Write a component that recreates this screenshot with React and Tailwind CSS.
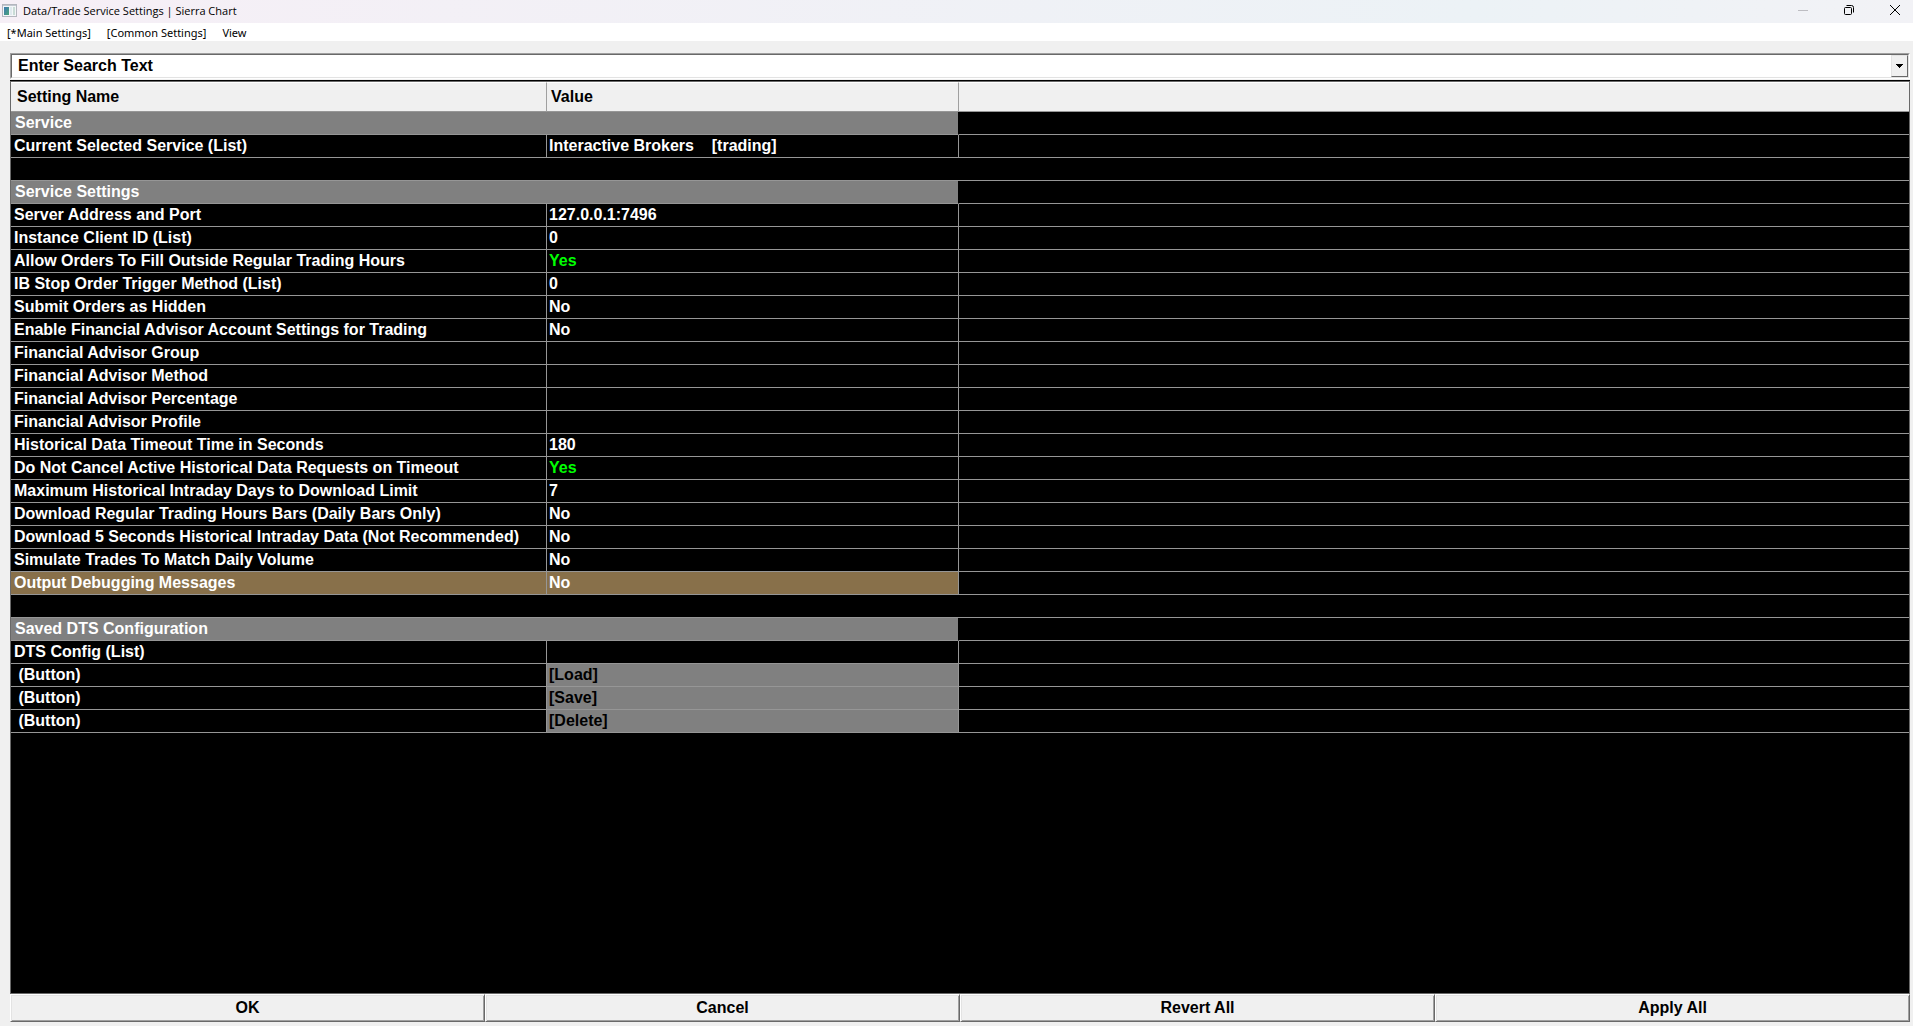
const SECTIONS = [
  {
    title: "Service",
    rows: [{ name: "Current Selected Service (List)", value: "Interactive Brokers    [trading]" }],
  },
  {
    title: "Service Settings",
    rows: [
      { name: "Server Address and Port", value: "127.0.0.1:7496" },
      { name: "Instance Client ID (List)", value: "0" },
      { name: "Allow Orders To Fill Outside Regular Trading Hours", value: "Yes" },
      { name: "IB Stop Order Trigger Method (List)", value: "0" },
      { name: "Submit Orders as Hidden", value: "No" },
      { name: "Enable Financial Advisor Account Settings for Trading", value: "No" },
      { name: "Financial Advisor Group", value: "" },
      { name: "Financial Advisor Method", value: "" },
      { name: "Financial Advisor Percentage", value: "" },
      { name: "Financial Advisor Profile", value: "" },
      { name: "Historical Data Timeout Time in Seconds", value: "180" },
      { name: "Do Not Cancel Active Historical Data Requests on Timeout", value: "Yes" },
      { name: "Maximum Historical Intraday Days to Download Limit", value: "7" },
      { name: "Download Regular Trading Hours Bars (Daily Bars Only)", value: "No" },
      { name: "Download 5 Seconds Historical Intraday Data (Not Recommended)", value: "No" },
      { name: "Simulate Trades To Match Daily Volume", value: "No" },
      { name: "Output Debugging Messages", value: "No", selected: true },
    ],
  },
  {
    title: "Saved DTS Configuration",
    rows: [
      { name: "DTS Config (List)", value: "" },
      { name: " (Button)", value: "[Load]", button: true },
      { name: " (Button)", value: "[Save]", button: true },
      { name: " (Button)", value: "[Delete]", button: true },
    ],
  },
];

const ACTIONS = ["OK", "Cancel", "Revert All", "Apply All"];

function AppIcon() {
  return (
    <svg width="15" height="13" viewBox="0 0 15 13" aria-hidden="true">
      <defs>
        <linearGradient id="pane" x1="0" y1="0" x2="1" y2="1">
          <stop offset="0" stopColor="#3f78b4" />
          <stop offset="1" stopColor="#4aa578" />
        </linearGradient>
      </defs>
      <rect x="0.5" y="0.5" width="14" height="12" fill="#f4f6f8" stroke="#b4b6be" />
      <rect x="1" y="1" width="13" height="1" fill="#c3c8d0" />
      <rect x="2" y="3" width="5" height="8" fill="url(#pane)" />
      <rect x="8" y="3" width="2" height="8" fill="#dfe9ee" />
      <rect x="11" y="3" width="2" height="8" fill="#c9dcd6" />
    </svg>
  );
}

function TitleBar() {
  return (
    <header className="flex h-[23px] items-center bg-linear-to-r from-[#f6eff6] via-[#ecf2f6] via-77% to-[#f2f2f6] pb-[3px] pl-[2px]">
      <AppIcon />
      <h1 className="flex-1 pt-px pl-[6px] text-[11px] leading-4">
        Data/Trade Service Settings | Sierra Chart
      </h1>
      <div className="flex h-full gap-[10px]">
        <button type="button" aria-label="Minimize" className="flex w-9 items-center justify-center">
          <svg width="10" height="10" viewBox="0 0 10 10" stroke="#bdbdc2">
            <path d="M0 5.5h10" />
          </svg>
        </button>
        <button type="button" aria-label="Restore" className="flex w-9 items-center justify-center">
          <svg width="10" height="10" viewBox="0 0 10 10" fill="none" stroke="#000">
            <rect x="0.5" y="2.5" width="7" height="7" rx="1" />
            <path d="M2.5 0.5h5a2 2 0 0 1 2 2v5" />
          </svg>
        </button>
        <button type="button" aria-label="Close" className="flex w-9 items-center justify-center">
          <svg width="10" height="10" viewBox="0 0 10 10" stroke="#000">
            <path d="M0 0l10 10M10 0L0 10" />
          </svg>
        </button>
      </div>
    </header>
  );
}

function MenuBar() {
  return (
    <nav className="flex h-[18px] items-center gap-4 bg-white pt-px pl-[7px] font-['Noto_Sans',sans-serif] text-[11px] leading-4">
      <button type="button">[*Main Settings]</button>
      <button type="button">[Common Settings]</button>
      <button type="button">View</button>
    </nav>
  );
}

function SearchBox() {
  return (
    <div className="flex border border-b-white border-l-[#a0a0a0] border-r-white border-t-[#a0a0a0]">
      <div className="flex h-6 flex-1 border border-b-[#e3e3e3] border-l-[#696969] border-r-[#e3e3e3] border-t-[#696969] bg-white">
        <input
          type="text"
          aria-label="Search settings"
          defaultValue="Enter Search Text"
          className="min-w-0 flex-1 pl-[6px] leading-5 outline-none"
        />
        <button
          type="button"
          aria-label="Show search history"
          className="flex w-[17px] items-center justify-center border border-b-[#696969] border-l-[#e3e3e3] border-r-[#696969] border-t-[#e3e3e3] bg-[#f0f0f0]"
        >
          <svg width="7" height="4" viewBox="0 0 7 4" shapeRendering="crispEdges">
            <path d="M0 0h7v1H6v1H5v1H4v1H3V3H2V2H1V1H0z" />
          </svg>
        </button>
      </div>
    </div>
  );
}

function SettingRow({ row }) {
  const bg = row.selected ? "bg-[#88704a]" : "bg-black";
  return (
    <tr className="h-[23px]">
      <td className={`${bg} border-b border-r border-[#969696] pl-[3px] whitespace-pre`}>{row.name}</td>
      <td
        className={`${row.button ? "bg-[#808080]" : bg} border-b border-r border-[#969696] pl-[2px] whitespace-pre ${
          row.value === "Yes" ? "text-[#00ff00]" : ""
        }`}
      >
        {row.button ? (
          <button type="button" className="block w-full text-left text-black">
            {row.value}
          </button>
        ) : (
          row.value
        )}
      </td>
      <td className="border-b border-[#969696]" />
    </tr>
  );
}

function Section({ section, first }) {
  return (
    <tbody>
      {!first && (
        <tr className="h-[23px]">
          <td colSpan={3} className="border-b border-[#969696]" />
        </tr>
      )}
      <tr className="h-[23px]">
        <th
          colSpan={2}
          className="border-r border-b border-r-black border-b-[#969696] bg-[#808080] pl-[4px] text-left"
        >
          {section.title}
        </th>
        <td className="border-b border-[#969696]" />
      </tr>
      {section.rows.map((row, i) => (
        <SettingRow key={i} row={row} />
      ))}
    </tbody>
  );
}

function SettingsTable() {
  return (
    <main className="min-h-0 flex-1 overflow-hidden border border-[#696969] bg-black text-white">
      <table className="w-full table-fixed border-separate border-spacing-0">
        <colgroup>
          <col className="w-[536px]" />
          <col className="w-[412px]" />
          <col />
        </colgroup>
        <thead>
          <tr className="h-[30px] bg-[#f0f0f0] text-left text-black">
            <th className="border-t border-b border-r border-t-white border-b-[#969696] border-r-[#a0a0a0] pl-[6px]">
              Setting Name
            </th>
            <th className="border-t border-b border-r border-t-white border-b-[#969696] border-r-[#a0a0a0] pl-[4px]">
              Value
            </th>
            <th className="border-t border-b border-t-white border-b-[#969696]" />
          </tr>
        </thead>
        {SECTIONS.map((section, i) => (
          <Section key={section.title} section={section} first={i === 0} />
        ))}
      </table>
    </main>
  );
}

export default function App() {
  return (
    <div className="flex h-screen flex-col bg-[#f0f0f0] font-['Open_Sans',sans-serif] text-black">
      <TitleBar />
      <MenuBar />
      <div className="flex min-h-0 flex-1 flex-col pt-3 pr-[3px] pb-1 pl-[10px] font-['Liberation_Sans',Arial,sans-serif] text-[16px] leading-[18px] font-bold">
        <SearchBox />
        <div className="mt-px h-px bg-black" />
        <SettingsTable />
        <footer className="grid grid-cols-4">
          {ACTIONS.map((label) => (
            <button
              key={label}
              type="button"
              className="h-7 border border-b-[#696969] border-l-white border-r-[#696969] border-t-white bg-[#f0f0f0] shadow-[inset_1px_1px_0_#e3e3e3,inset_-1px_-1px_0_#a0a0a0]"
            >
              {label}
            </button>
          ))}
        </footer>
      </div>
    </div>
  );
}
